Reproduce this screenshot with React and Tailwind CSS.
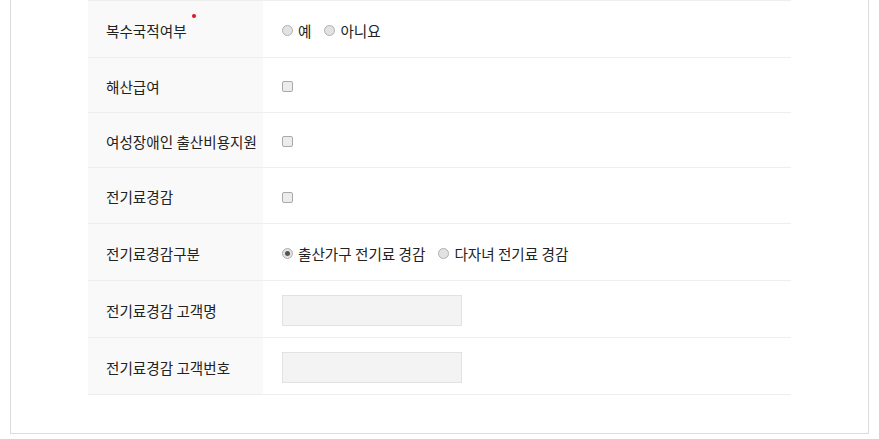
const font = { fontFamily: '"Malgun Gothic", "Noto Sans CJK KR", "Noto Sans", sans-serif' };

const Radio = ({ checked, label }) => (
  <label className="flex items-center mr-[13px]">
    <span className="w-[11px] h-[11px] rounded-full border border-[#b0b0b0] bg-[#e2e2e2] flex items-center justify-center">
      {checked && <span className="w-[5px] h-[5px] rounded-full bg-[#555]" />}
    </span>
    <span className="ml-[5px]">{label}</span>
  </label>
);

const Checkbox = () => (
  <span className="block w-[11px] h-[11px] rounded-[2px] border border-[#a9a9a9] bg-[#ececec]" />
);

const TextInput = () => (
  <input type="text" className="w-[180px] h-[31px] bg-[#f3f3f3] border border-[#e2e2e2] outline-none" />
);

const rows = [
  { label: "복수국적여부", required: true, h: "h-[57px]", field: (
    <div className="flex items-center">
      <Radio label="예" />
      <Radio label="아니요" />
    </div>
  ) },
  { label: "해산급여", h: "h-[55px]", field: <Checkbox /> },
  { label: "여성장애인 출산비용지원", h: "h-[55px]", field: <Checkbox /> },
  { label: "전기료경감", h: "h-[56px]", field: <Checkbox /> },
  { label: "전기료경감구분", h: "h-[57px]", field: (
    <div className="flex items-center">
      <Radio checked label="출산가구 전기료 경감" />
      <Radio label="다자녀 전기료 경감" />
    </div>
  ) },
  { label: "전기료경감 고객명", h: "h-[57px]", field: <TextInput /> },
  { label: "전기료경감 고객번호", h: "h-[57px]", field: <TextInput /> },
];

export default function App() {
  return (
    <div className="w-[879px] h-[439px] bg-white px-[10px] overflow-hidden" style={font}>
      <div className="border-x border-b border-[#dcdcdc] pl-[77px] pr-[77px] pb-[38px]">
        <div className="w-[703px] border-t border-[#eeeeee] text-[14.6px] text-[#222]">
          {rows.map((row) => (
            <div key={row.label} className={`flex border-b border-[#eeeeee] ${row.h}`}>
              <div className="w-[175px] bg-[#f9f9f9] pl-[18px] pt-[3px] flex items-center">
                <span className="relative">
                  {row.label}
                  {row.required && (
                    <span className="absolute -right-[9px] -top-[6px] w-[4px] h-[4px] rounded-full bg-[#e0141e]" />
                  )}
                </span>
              </div>
              <div className="flex-1 pl-[19px] pt-[3px] flex items-center">{row.field}</div>
            </div>
          ))}
        </div>
      </div>
    </div>
  );
}
